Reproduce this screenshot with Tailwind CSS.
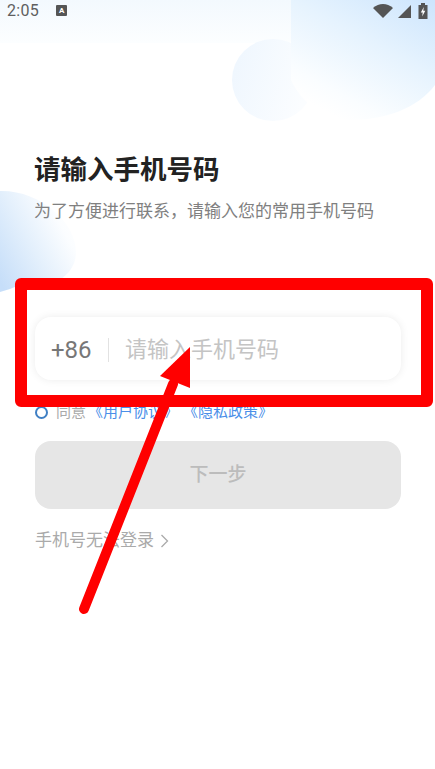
<!DOCTYPE html>
<html lang="zh-CN">
<head>
    <meta charset="UTF-8">
    <meta name="viewport" content="width=device-width, initial-scale=1.0">
    <title>请输入手机号码</title>
    <script src="https://cdn.jsdelivr.net/npm/@tailwindcss/browser@4"></script>
</head>
<body class="bg-white">
<div class="relative w-[435px] h-[769px] overflow-hidden bg-white font-['Roboto','Noto_Sans_CJK_SC',sans-serif]">

    <!-- background clouds -->
    <svg class="absolute left-0 top-0" width="435" height="300" viewBox="0 0 435 300">
        <defs>
            <linearGradient id="topFade" x1="0" y1="0" x2="0" y2="1">
                <stop offset="0" stop-color="#f3f9fe"/>
                <stop offset="1" stop-color="#fcfeff"/>
            </linearGradient>
            <linearGradient id="bigCloud" x1="1" y1="0" x2="0.35" y2="1">
                <stop offset="0" stop-color="#cde5fd"/>
                <stop offset="0.45" stop-color="#e6f3fe"/>
                <stop offset="0.85" stop-color="#fafdff"/>
                <stop offset="1" stop-color="#ffffff"/>
            </linearGradient>
            <linearGradient id="smallCloud" x1="0" y1="0" x2="1" y2="0.3">
                <stop offset="0" stop-color="#eef6fe"/>
                <stop offset="1" stop-color="#fbfdff"/>
            </linearGradient>
            <linearGradient id="leftCloud" x1="0" y1="0.9" x2="1" y2="0.2">
                <stop offset="0" stop-color="#c6def9"/>
                <stop offset="0.45" stop-color="#e4f0fc"/>
                <stop offset="0.8" stop-color="#fbfdff"/>
                <stop offset="1" stop-color="#ffffff"/>
            </linearGradient>
        </defs>
        <rect x="0" y="0" width="292" height="43" fill="url(#topFade)"/>
        <circle cx="273" cy="80" r="41" fill="url(#smallCloud)"/>
        <path d="M291 0H435V85C418 108 385 120 350 120C322 120 300 100 291 80Z" fill="url(#bigCloud)"/>
        <path d="M0 191C40 190 76 222 76 252C76 266 68 274 60 280C40 284 20 284 10 289L0 292Z" fill="url(#leftCloud)"/>
    </svg>

    <!-- status bar -->
    <div class="relative flex items-center h-5 pt-px pl-[7px] pr-[7px] text-[#5f5f5f]">
        <span class="text-[16px] leading-5 tracking-[0.3px]">2:05</span>
        <span class="ml-[17px] flex w-[11px] h-[11px] items-center justify-center rounded-[1px] bg-[#555] text-[8px] leading-none font-bold text-white">A</span>
        <div class="ml-auto flex items-center gap-[3px]">
            <svg width="21" height="14" viewBox="0 0 21 14"><path d="M0 4C3 1.300 6.500 0 10 0C13.500 0 17 1.300 20 4L10 14Z" fill="#555"/></svg>
            <svg width="16" height="14" viewBox="0 0 16 14"><path d="M14 1V14H1Z" fill="#555"/></svg>
            <svg width="10" height="16" viewBox="0 0 10 16" class="ml-[2px]"><path d="M3 0H7V2H9.500V16H0.500V2H3Z" fill="#555"/><path d="M5.800 4L2.800 9.500H4.700L4.200 13.500L7.300 7.800H5.300Z" fill="#fff"/></svg>
        </div>
    </div>

    <!-- content -->
    <main class="relative px-[34px]">
        <h1 class="mt-[132px] text-[26.500px] leading-9 font-bold text-[#222]">请输入手机号码</h1>
        <p class="mt-[11px] text-[17px] leading-6 text-[#808080]">为了方便进行联系，请输入您的常用手机号码</p>

        <div class="mt-[94px] ml-px pt-[2px] flex items-center w-[366px] h-[63px] rounded-2xl bg-white shadow-[0_0_8px_rgba(0,0,0,0.08)]">
            <span class="pl-[16px] w-[73px] text-[24px] leading-none text-[#777]">+86</span>
            <span class="w-px h-6 bg-[#e2e2e2]"></span>
            <span class="ml-4 text-[22px] leading-none text-[#c4c4c4]">请输入手机号码</span>
        </div>

        <div class="mt-[22px] ml-px flex items-center h-5 text-[15px]">
            <span class="w-[13px] h-[13px] rounded-full border-2 border-[#3f7fc4]"></span>
            <span class="ml-2 text-[#aaa]">同意</span>
            <span class="ml-[2px] text-[#4a8ee8]">《用户协议》</span>
            <span class="ml-[5px] text-[#4a8ee8]">《隐私政策》</span>
        </div>

        <button class="mt-[19px] ml-px block w-[366px] h-[68px] rounded-2xl bg-[#e6e6e6] text-[19px] font-medium text-[#bcbcbc]">下一步</button>

        <div class="mt-5 ml-px flex items-center h-6 text-[17px] text-[#aaa]">
            <span>手机号无法登录</span>
            <svg width="9" height="14" viewBox="0 0 9 14" class="ml-[6px]"><path d="M1.500 1L7.500 7L1.500 13" fill="none" stroke="#aaa" stroke-width="1.300"/></svg>
        </div>
    </main>

    <!-- red annotation -->
    <div class="absolute left-[15px] top-[278px] w-[418px] h-[129px] rounded-[6px] border-[12px] border-[#ff0000]"></div>
    <svg class="absolute left-0 top-0" width="435" height="769" viewBox="0 0 435 769">
        <path d="M84 609L173 384" fill="none" stroke="#ff0000" stroke-width="10" stroke-linecap="round"/>
        <path d="M190 347L160 376L190 388Z" fill="#ff0000"/>
    </svg>
</div>
</body>
</html>
